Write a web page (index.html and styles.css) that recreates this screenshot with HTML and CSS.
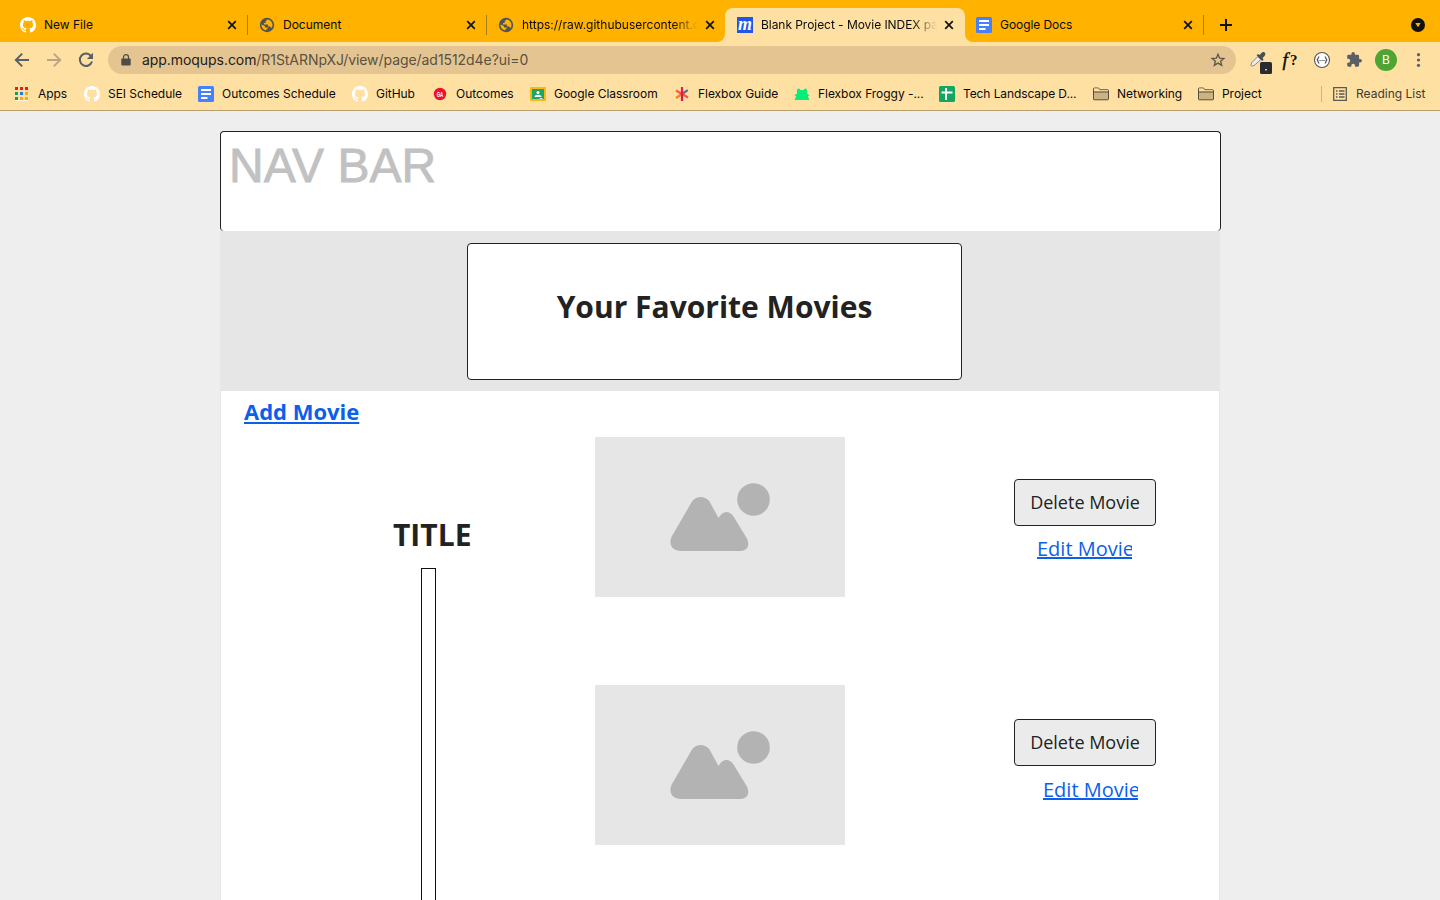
FILE: index.html
```html
<!DOCTYPE html>
<html lang="en">
<head>
<meta charset="utf-8">
<title>Blank Project - Movie INDEX page</title>
<link rel="stylesheet" href="styles.css">
</head>
<body>
<svg class="defs" width="0" height="0">
  <symbol id="github" viewBox="0 0 16 16"><path fill="#fff" d="M8 0C3.58 0 0 3.58 0 8c0 3.54 2.29 6.53 5.47 7.59.4.07.55-.17.55-.38 0-.19-.01-.82-.01-1.49-2.01.37-2.53-.49-2.69-.94-.09-.23-.48-.94-.82-1.13-.28-.15-.68-.52-.01-.53.63-.01 1.08.58 1.23.82.72 1.21 1.87.87 2.33.66.07-.52.28-.87.51-1.07-1.78-.2-3.64-.89-3.64-3.95 0-.87.31-1.59.82-2.15-.08-.2-.36-1.02.08-2.12 0 0 .67-.21 2.2.82.64-.18 1.32-.27 2-.27s1.36.09 2 .27c1.53-1.04 2.2-.82 2.2-.82.44 1.1.16 1.92.08 2.12.51.56.82 1.27.82 2.15 0 3.07-1.87 3.75-3.65 3.95.29.25.54.73.54 1.48 0 1.07-.01 1.93-.01 2.2 0 .21.15.46.55.38A8.01 8.01 0 0 0 16 8c0-4.42-3.58-8-8-8z"/></symbol>
  <symbol id="globe" viewBox="0 0 16 16"><circle cx="8" cy="8" r="7.200" fill="#505458"/><path fill="#ffb200" d="M8.600 2.500 6.800 4v1.300q0 .8-.8.800H4.900v1.300h3.400q.8 0 .8.800v1.300h1.500q.9 0 1.200.7l.8.900A5.600 5.600 0 0 0 8.600 2.500zM2.500 7.600a5.500 5.500 0 0 0 4.800 5.900v-1.400h1.300v-1.500H6.800q-.9 0-.9-.9v-.8z"/></symbol>
  <symbol id="docs" viewBox="0 0 16 16"><rect width="16" height="16" rx="1.500" fill="#4680fa"/><path fill="#fff" d="M3 3h10v2H3zM3 7h10v2H3zM3 11h6.500v2H3z"/></symbol>
  <symbol id="close" viewBox="0 0 10 10"><path stroke="#111" stroke-width="1.700" d="m1.200 1.200 7.600 7.600M8.800 1.200 1.200 8.800"/></symbol>
  <symbol id="folder" viewBox="0 0 16 14"><path fill="#cbb384" stroke="#57503f" d="M.500 12V1.800q0-.8.800-.8H5.500l1.500 1.800h7.700q.8 0 .8.800V12q0 .8-.8.800H1.300q-.8 0-.8-.8z"/><path fill="#ffe0a3" d="M1 1.500h4.300l1.500 1.800H15v1.200H1z"/><path stroke="#57503f" d="M.500 5h15"/></symbol>
  <symbol id="picture" viewBox="0 0 250 160"><rect width="250" height="160" fill="#e6e6e6"/><circle cx="158.500" cy="62.500" r="16.300" fill="#b3b3b3"/><path fill="#b3b3b3" d="M97 64.500C101 58.500 110 58.500 114.500 64.500L123.500 81C127.500 73.500 134 73 138.500 79.500L151 100C156 108 152 114 145.500 114H86C77 114 73 107 77 99z"/></symbol>
</svg>
<header class="browser">
  <div class="tabs">
    <div class="tab"><svg class="ico"><use href="#github"/></svg><span class="tab-label">New File</span><svg class="close"><use href="#close"/></svg></div>
    <div class="tab"><svg class="ico"><use href="#globe"/></svg><span class="tab-label">Document</span><svg class="close"><use href="#close"/></svg></div>
    <div class="tab last"><svg class="ico"><use href="#globe"/></svg><span class="tab-label fade">https://raw.githubusercontent.com</span><svg class="close"><use href="#close"/></svg></div>
    <div class="tab active"><span class="ico moqups">m</span><span class="tab-label fade">Blank Project - Movie INDEX page</span><svg class="close"><use href="#close"/></svg></div>
    <div class="tab after"><svg class="ico"><use href="#docs"/></svg><span class="tab-label">Google Docs</span><svg class="close"><use href="#close"/></svg></div>
    <svg class="plus" viewBox="0 0 12 12"><path stroke="#111" stroke-width="2" d="M6 0v12M0 6h12"/></svg>
    <svg class="tab-search" viewBox="0 0 14 14"><circle cx="7" cy="7" r="7" fill="#111"/><path fill="#ffb200" d="M4.300 5h5.400L7 9.300z"/></svg>
  </div>
  <div class="toolbar">
    <svg class="nav" viewBox="0 0 16 16"><path fill="none" stroke="#5a5e66" stroke-width="1.900" d="M15 8H2M8.200 1.600 1.800 8l6.400 6.400"/></svg>
    <svg class="nav" viewBox="0 0 16 16"><path fill="none" stroke="#b9a582" stroke-width="1.900" d="M1 8h13M7.800 1.600 14.200 8l-6.400 6.400"/></svg>
    <svg class="nav" viewBox="0 0 16 16"><path fill="none" stroke="#5a5e66" stroke-width="2" d="M13.200 4.200A6.200 6.200 0 1 0 14 9.500"/><path fill="#5a5e66" d="M15 .8v6.100H8.900z"/></svg>
    <div class="address">
      <svg class="lock" viewBox="0 0 10 12"><path fill="#4f4c48" d="M1.200 4.500h7.600q.9 0 .9.900v5.100q0 .9-.9.900H1.200q-.9 0-.9-.9V5.400q0-.9.900-.9z"/><path fill="none" stroke="#4f4c48" stroke-width="1.200" d="M2.500 5V3.200a2.500 2.500 0 0 1 5 0V5"/></svg>
      <span class="url"><b>app.moqups.com</b>/R1StARNpXJ/view/page/ad1512d4e?ui=0</span>
      <svg class="star" viewBox="0 0 16 16"><path fill="none" stroke="#5c564c" stroke-width="1.300" d="m8 2.200 1.600 4 4.300.3-3.300 2.700 1.100 4.200L8 11.100l-3.700 2.300 1.100-4.200-3.300-2.700 4.300-.3z"/></svg>
    </div>
    <div class="extensions">
      <svg viewBox="0 0 24 24"><path fill="#eef0f0" stroke="#777b80" stroke-width=".9" d="m11.800 8.600 3 3-6.300 5.600-2.800 1-.9-.9 1-2.700z"/><path fill="#4b4e54" d="m10.600 7.300 1.500-1.300 1.400 1.100 2-2.200c2.200-2.200 5.400.7 3 3l-2 2.100 1.100 1.400-1.400 1.500z"/><rect x="14" y="14" width="12" height="12" rx="1.500" fill="#292b30"/><path fill="#fff" d="M19.300 21h1.400v1.400h-1.400z"/></svg>
      <span class="whatfont"><i>f</i>?</span>
      <svg viewBox="0 0 24 24"><circle cx="12" cy="12" r="7.500" fill="#fff" stroke="#555" stroke-width="1.100"/><path fill="none" stroke="#444" stroke-width="1.100" d="M9.300 8.800c-1.900 0-.7 2.400-2 3.200 1.300.8.100 3.200 2 3.200M14.700 8.800c1.900 0 .7 2.400 2 3.200-1.300.8-.1 3.200-2 3.200"/><path fill="#444" d="M9.500 11.900h1.100V13H9.500zM11.500 11.900h1.100V13h-1.100zM13.500 11.900h1.100V13h-1.100z"/></svg>
      <svg viewBox="0 0 24 24"><path fill="#5a5e66" transform="translate(3.800 3.300) scale(.7)" d="M20.500 11H19V7a2 2 0 0 0-2-2h-4V3.500a2.500 2.500 0 0 0-5 0V5H4a2 2 0 0 0-2 2v3.800h1.500a2.700 2.700 0 0 1 0 5.400H2V20a2 2 0 0 0 2 2h3.800v-1.500a2.700 2.700 0 0 1 5.400 0V22H17a2 2 0 0 0 2-2v-4h1.500a2.500 2.500 0 0 0 0-5z"/></svg>
      <span class="avatar">B</span>
      <svg viewBox="0 0 24 24"><g fill="#5a5e66"><circle cx="12.500" cy="6.700" r="1.600"/><circle cx="12.500" cy="12" r="1.600"/><circle cx="12.500" cy="17.300" r="1.600"/></g></svg>
    </div>
  </div>
  <nav class="bookmarks">
    <a><svg class="ico" viewBox="0 0 16 16"><path fill="#fff" d="M1 14h13v1H1z" opacity=".6"/><path fill="#f01818" d="M1 1h3v3H1zM6 1h3v3H6zM11 1h3v3h-3z"/><path fill="#14a050" d="M1 6h3v3H1zM1 11h3v3H1z"/><path fill="#1778f2" d="M6 6h3v3H6z"/><path fill="#f8ab10" d="M11 6h3v3h-3zM6 11h3v3H6zM11 11h3v3h-3z"/></svg><span>Apps</span></a>
    <a><svg class="ico"><use href="#github"/></svg><span>SEI Schedule</span></a>
    <a><svg class="ico"><use href="#docs"/></svg><span>Outcomes Schedule</span></a>
    <a><svg class="ico"><use href="#github"/></svg><span>GitHub</span></a>
    <a><svg class="ico" viewBox="0 0 16 16"><circle cx="8" cy="8" r="6.200" fill="#f0102a"/><text class="ga" x="8" y="11" textLength="6.500" lengthAdjust="spacingAndGlyphs">GA</text></svg><span>Outcomes</span></a>
    <a><svg class="ico" viewBox="0 0 16 16"><rect y="1" width="16" height="14" rx="1" fill="#f6ba12"/><path fill="#20a465" d="M2 3h12v10H2z"/><circle cx="8" cy="6.500" r="1.500" fill="#fff"/><path fill="#fff" d="M4.500 11c0-3 7-3 7 0z"/><path fill="#d8e8d9" d="M9.500 12h3v1h-3z"/></svg><span>Google Classroom</span></a>
    <a><svg class="ico" viewBox="0 0 16 16"><g stroke-width="2.200"><path stroke="#6c6391" d="m8 8 5.800-3.800"/><path stroke="#ff7a20" d="m8 8-6 4"/><path stroke="#ff5638" d="M8 8 2 4.500"/><path stroke="#ef5a47" d="m8 8 6 3.500"/><path stroke="#e51c5b" d="M8 1v7"/><path stroke="#d51c46" d="M8 7v8"/></g></svg><span>Flexbox Guide</span></a>
    <a><svg class="ico" viewBox="0 0 16 16"><path fill="#08ed79" d="M3 4.500q0-2 1.500-2T6.400 4h3.200q.4-1.500 1.900-1.500T13 4.500v3l2.500 1.700-1.600 1L15.500 14H.500l1.600-3.800-1.600-1L3 7.500z"/></svg><span>Flexbox Froggy -...</span></a>
    <a><svg class="ico" viewBox="0 0 16 16"><rect width="16" height="16" rx="1.500" fill="#12a660"/><path fill="#fff" d="M6 2h2v3.500h5.500v2H8V14H6V7.500H2.500v-2H6z"/></svg><span class="tight">Tech Landscape D...</span></a>
    <a><svg class="ico"><use href="#folder"/></svg><span>Networking</span></a>
    <a><svg class="ico"><use href="#folder"/></svg><span>Project</span></a>
    <a class="reading"><svg class="ico" viewBox="0 0 16 16"><path fill="none" stroke="#5a5954" stroke-width="1.300" d="M1.700 1.700h12.600v12.600H1.700z"/><path stroke="#5a5954" stroke-width="1.400" d="M4 5h1.500M7 5h5.500M4 8h1.500M7 8h5.500M4 11h1.500M7 11h5.500"/></svg><span>Reading List</span></a>
  </nav>
</header>
<main class="page">
  <div class="navbar">NAV BAR</div>
  <section class="hero"><h1>Your Favorite Movies</h1></section>
  <section class="movies">
    <div class="details">
      <a class="add">Add Movie</a>
      <h2>TITLE</h2>
      <div class="divider"></div>
    </div>
    <div class="pictures">
      <svg class="picture"><use href="#picture"/></svg>
      <svg class="picture"><use href="#picture"/></svg>
    </div>
    <div class="actions">
      <div class="action"><button>Delete Movie</button><a class="edit">Edit Movie</a></div>
      <div class="action second"><button>Delete Movie</button><a class="edit">Edit Movie</a></div>
    </div>
  </section>
</main>
</body>
</html>
```

FILE: styles.css
```css
* { box-sizing: border-box; }
body { margin: 0; height: 900px; overflow: hidden; background: #eee; font-family: "Open Sans", sans-serif; color: #222; }
svg { display: block; flex: none; }
.defs { position: absolute; }
.browser { height: 111px; background: #ffe0a3; border-bottom: 1px solid #b9a06f; font-family: Inter, sans-serif; font-size: 12px; color: #0a0a0a; }
.ico { width: 16px; height: 16px; flex: none; }

.tabs { display: flex; height: 42px; padding: 8px 15px 0 8px; background: linear-gradient(#ffb200, #ffb200) 0 0 / 100% 34px no-repeat, linear-gradient(90deg, #ffb200 717px, #ffe0a3 717px 973px, #ffb200 973px); }
.tab { display: flex; align-items: center; width: 239px; height: 34px; padding: 0 11px 0 12px; background: linear-gradient(#a77b17, #a77b17) right 7px / 1px 20px no-repeat; }
.tab:first-child { width: 240px; }
.tab:nth-child(2) { padding-left: 11px; }
.tab.last { width: 238px; padding-left: 11px; padding-right: 10px; background: #ffb200; border-bottom-right-radius: 8px; }
.tab.active { width: 240px; padding-right: 11px; background: #ffe0a3; border-radius: 8px 8px 0 0; }
.tab.after { padding-left: 11px; background-color: #ffb200; border-bottom-left-radius: 8px; }
.tab-label { width: 176px; margin: 0 auto 0 8px; white-space: nowrap; overflow: hidden; line-height: 18px; }
.fade { -webkit-mask-image: linear-gradient(90deg, #000 86%, transparent); mask-image: linear-gradient(90deg, #000 86%, transparent); }
.active .fade { letter-spacing: -.05px; }
.after .tab-label { letter-spacing: -.07px; }
.close { width: 10px; height: 10px; }
.plus { width: 12px; height: 12px; margin: 11px 0 0 16px; }
.tab-search { width: 14px; height: 14px; margin: 10px 0 0 auto; }
.moqups { background: #2055ea; color: #fff; font: italic bold 18px/14px "Liberation Serif", serif; text-align: center; }

.toolbar { display: flex; align-items: center; height: 36px; padding-left: 14px; }
.nav { width: 16px; height: 16px; margin-right: 16px; }
.address { display: flex; align-items: center; width: 1128px; height: 28px; margin-left: -2px; padding: 0 10px 0 13px; border-radius: 14px; background: #e4c591; }
.lock { width: 10px; height: 12px; }
.url { flex: 1; margin: -1px 0 0 11px; font-size: 14px; letter-spacing: -.06px; color: #5a5142; }
.url b { font-weight: 400; color: #202020; }
.star { width: 16px; height: 16px; }
.extensions { display: grid; grid-template-columns: repeat(6, 32px); margin-left: 6px; justify-items: center; align-items: center; }
.extensions svg { width: 24px; height: 24px; overflow: visible; }
.whatfont { display: flex; gap: 2px; font: bold 15px/24px "Liberation Serif", serif; }
.whatfont i { font-size: 19px; font-weight: 400; -webkit-text-stroke: .4px #0a0a0a; }
.avatar { width: 22px; height: 22px; border-radius: 50%; background: #4fa433; color: #fff; line-height: 22px; text-align: center; }

.bookmarks { display: grid; grid-template-columns: 70px 114px 154px 80px 98px 144px 120px 145px 154px 105px 123px 119px; align-items: center; height: 32px; padding-left: 14px; letter-spacing: -.04px; }
.bookmarks a { display: flex; align-items: center; gap: 8px; white-space: nowrap; }
.bookmarks span { margin-top: -2px; }
.bookmarks .tight { letter-spacing: -.1px; }
.bookmarks .reading { height: 16px; padding-left: 10px; border-left: 1px solid #d2b57e; color: #3b3b38; letter-spacing: 0; }
.ga { fill: #fff; font: bold 8px "Liberation Sans", sans-serif; letter-spacing: 0; text-anchor: middle; }

.page { width: 1001px; height: 769px; margin: 20px 0 0 220px; overflow: hidden; }
.navbar { height: 100px; padding: 6px 0 0 8px; border: 1px solid #222; border-bottom: 0; border-radius: 4px; background: #fff; color: #c1c1c1; -webkit-text-stroke: .8px #c1c1c1; font: 48px/55px "Liberation Sans", sans-serif; }
.hero { display: flex; width: 1000px; height: 160px; padding: 12px 0 0 247px; background: #e6e6e6; }
.hero h1 { width: 495px; height: 137px; margin: 0; border: 1px solid #222; border-radius: 4px; background: #fff; font-size: 30px; line-height: 126px; text-align: center; }
.movies { display: grid; grid-template-columns: 374px 250px 374px; width: 1000px; height: 509px; background: #fff; border: solid #e9e9e9; border-width: 0 1px; }
.details { display: flex; flex-direction: column; }
.add { margin: 4px 0 0 23px; font-size: 22px; font-weight: 700; line-height: 32px; color: #0b5fea; text-decoration: underline; }
.details h2 { margin: 87px 0 0 172px; font-size: 30px; line-height: 42px; }
.divider { flex: 1; width: 15px; margin: 12px 0 0 200px; border: 1px solid #111; border-bottom: 0; background: #fff; }
.pictures { display: flex; flex-direction: column; gap: 88px; padding-top: 46px; }
.picture { width: 250px; height: 160px; }
.actions { display: flex; flex-direction: column; gap: 153px; padding: 88px 0 0 169px; }
.action { height: 87px; }
button { display: block; width: 142px; height: 47px; padding: 0; border: 1px solid #222; border-radius: 4px; background: #ebebeb; color: #222; font: 18px/45px "Open Sans", sans-serif; }
.edit { display: block; width: 95px; height: 30px; margin: 8px 0 0 23px; overflow: hidden; white-space: nowrap; color: #0b5fea; font-size: 20px; line-height: 30px; text-decoration: underline; }
.second .edit { margin-left: 29px; margin-top: 9px; }
```
